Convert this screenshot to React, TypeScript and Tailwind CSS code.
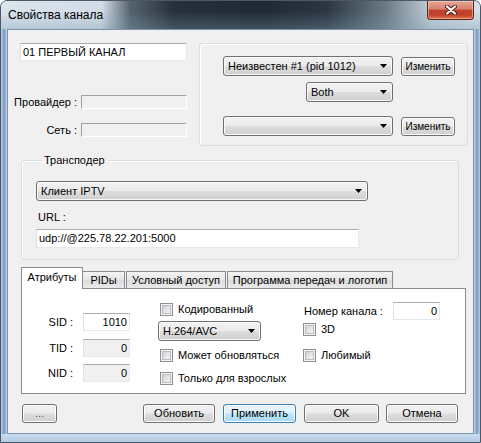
import React from 'react'

const font = "[font-family:'Liberation_Sans',Arial,sans-serif]"

function Arrow() {
  return (
    <svg width="7" height="4" viewBox="0 0 7 4" className="shrink-0">
      <path d="M0 0h7L3.5 4z" fill="#000" />
    </svg>
  )
}

function Combo({ className, text }: { className: string; text?: string }) {
  return (
    <div
      className={`flex items-center justify-between rounded-[3px] border border-[#707070] bg-[linear-gradient(#f2f2f2_0%,#ebebeb_48%,#dddddd_52%,#cfcfcf_100%)] pl-[4px] pr-[5px] text-[11px] shadow-[inset_0_0_0_1px_#fafafa] ${className}`}
    >
      <span className="truncate">{text}</span>
      <Arrow />
    </div>
  )
}

function Button({ className, children, hot }: { className: string; children: React.ReactNode; hot?: boolean }) {
  const skin = hot
    ? 'border-[#3c7fb1] bg-[linear-gradient(#eaf6fd_0%,#d9f0fc_48%,#bee6fd_52%,#a7d9f5_100%)]'
    : 'border-[#707070] bg-[linear-gradient(#f2f2f2_0%,#ebebeb_48%,#dddddd_52%,#cfcfcf_100%)]'
  return (
    <div
      className={`flex items-center justify-center rounded-[3px] border ${skin} shadow-[inset_0_0_0_1px_#fcfcfc] ${className}`}
    >
      {children}
    </div>
  )
}

function TextBox({ className, value, right }: { className: string; value?: string; right?: boolean }) {
  return (
    <div
      className={`flex items-center border border-t-[#abadb3] border-l-[#dbdfe6] border-r-[#e3e9ef] border-b-[#e3e9ef] px-[2px] text-[11px] ${right ? 'justify-end' : ''} ${className}`}
    >
      {value}
    </div>
  )
}

function Check({ label, className }: { label: string; className: string }) {
  return (
    <div className={`flex items-center ${className}`}>
      <div className="h-[13px] w-[13px] border border-[#8e8f8f] bg-[#f4f4f4] p-[1px]">
        <div className="h-full w-full border border-[#b8bcc1] bg-[linear-gradient(135deg,#cfd2d6,#f6f6f6)]" />
      </div>
      <span className="ml-[5px] text-[11px] leading-[13px]">{label}</span>
    </div>
  )
}

function Sunken({ className }: { className: string }) {
  return <div className={`border border-t-[#a0a0a0] border-l-[#a0a0a0] border-r-white border-b-white ${className}`} />
}

export default function App() {
  return (
    <div
      className={`${font} flex h-[443px] w-[481px] flex-col overflow-hidden rounded-t-[7px] border border-[#4a5868] bg-[#c3d6ea] font-normal text-black`}
    >
      {/* title bar */}
      <div className="flex h-[28px] shrink-0 items-start justify-between bg-[linear-gradient(to_bottom,rgba(0,0,0,0)_35%,rgba(120,155,175,0.35)_100%),linear-gradient(to_right,#dbe4ed_0%,#d2dce6_21%,#56636f_27%,#26303a_36%,#1f2933_55%,#2c3743_68%,#6a7884_80%,#c3cfdb_90%,#d6e0ea_100%)]">
        <span className="ml-[7px] mt-[7px] text-[12px] leading-[15px] text-black">Свойства канала</span>
        <div className="mr-[6px] flex h-[19px] w-[47px] items-center justify-center rounded-b-[4px] border border-t-0 border-[#5c2318] bg-[linear-gradient(#e7a896_0%,#d4806c_45%,#c0412b_52%,#c0432c_78%,#e0744f_100%)] shadow-[inset_0_0_0_1px_rgba(255,210,190,0.55)]">
          <svg width="12" height="10" viewBox="0 0 12 10">
            <path d="M2 1.5L10 8.5M10 1.5L2 8.5" stroke="#4a1a10" strokeWidth="4" strokeLinecap="round" />
            <path d="M2 1.5L10 8.5M10 1.5L2 8.5" stroke="#fff" strokeWidth="2.2" strokeLinecap="round" />
          </svg>
        </div>
      </div>

      <div className="flex flex-1">
        <div className="w-[6px] bg-[linear-gradient(to_right,#b9cee5,#7a98c0_55%,#c8dbef)]" />

        {/* client */}
        <div className="flex w-[467px] flex-col border border-[#7d91a8] bg-[#f0f0f0]">
          {/* top section */}
          <div className="flex items-start pt-[13px]">
            <div className="flex w-[179px] flex-col">
              <TextBox className="ml-[12px] h-[18px] w-[167px] bg-white" value="01 ПЕРВЫЙ КАНАЛ" />
              <div className="mt-[33px] flex items-center">
                <span className="w-[69px] text-right text-[11px]">Провайдер :</span>
                <Sunken className="ml-[4px] h-[14px] w-[106px]" />
              </div>
              <div className="mt-[11px] flex items-center">
                <span className="w-[69px] text-right text-[11px]">Сеть :</span>
                <Sunken className="ml-[4px] h-[14px] w-[106px]" />
              </div>
            </div>

            <div className="ml-[12px] flex h-[103px] w-[269px] flex-col rounded-[3px] border border-[#d5dfe5] pl-[23px] pt-[12px] shadow-[inset_1px_1px_0_#fff]">
              <div className="flex items-center">
                <Combo className="h-[20px] w-[170px]" text="Неизвестен #1 (pid 1012)" />
                <Button className="ml-[8px] h-[19px] w-[54px] text-[10px]">Изменить</Button>
              </div>
              <Combo className="ml-[83px] mt-[6px] h-[20px] w-[87px]" text="Both" />
              <div className="mt-[14px] flex items-center">
                <Combo className="h-[20px] w-[170px]" />
                <Button className="ml-[8px] h-[19px] w-[54px] text-[10px]">Изменить</Button>
              </div>
            </div>
          </div>

          {/* transponder */}
          <fieldset className="ml-[13px] mt-[7px] w-[438px] rounded-[3px] border border-[#d5dfe5] pb-[11px] pl-[14px] shadow-[inset_1px_1px_0_#fff]">
            <legend className="ml-[6px] px-[2px] text-[11px] font-normal leading-[14px]">Транспoдер</legend>
            <Combo className="mt-[14px] h-[20px] w-[332px]" text="Клиент IPTV" />
            <div className="ml-[2px] mt-[10px] text-[11px] leading-[13px]">URL :</div>
            <TextBox className="mt-[5px] h-[19px] w-[323px] bg-white" value="udp://@225.78.22.201:5000" />
          </fieldset>

          {/* tabs */}
          <div className="ml-[13px] mt-[7px] flex items-end text-[11px]">
            <div className="relative z-10 -mb-[1px] flex h-[22px] w-[62px] items-center justify-center border border-b-0 border-[#898c95] bg-white pb-[2px]">
              Атрибуты
            </div>
            <div className="flex h-[17px] w-[42px] items-center justify-center border border-b-0 border-l-0 border-[#898c95] bg-[linear-gradient(#f3f3f3,#e6e6e6_50%,#dcdcdc_51%,#e9e9e9)]">
              PIDы
            </div>
            <div className="ml-[1px] flex h-[17px] w-[100px] items-center justify-center border border-b-0 border-[#898c95] bg-[linear-gradient(#f3f3f3,#e6e6e6_50%,#dcdcdc_51%,#e9e9e9)]">
              Условный доступ
            </div>
            <div className="ml-[1px] flex h-[17px] w-[166px] items-center justify-center border border-b-0 border-[#898c95] bg-[linear-gradient(#f3f3f3,#e6e6e6_50%,#dcdcdc_51%,#e9e9e9)]">
              Программа передач и логотип
            </div>
          </div>
          <div className="ml-[13px] flex h-[106px] w-[445px] items-start border border-[#898c95] bg-white text-[11px]">
            <div className="flex w-[108px] flex-col">
              <div className="mt-[24px] flex items-center">
                <span className="w-[51px] text-right">SID :</span>
                <TextBox className="ml-[10px] h-[18px] w-[47px] bg-white" value="1010" right />
              </div>
              <div className="mt-[8px] flex items-center">
                <span className="w-[51px] text-right">TID :</span>
                <TextBox className="ml-[10px] h-[18px] w-[47px] bg-[#f0f0f0]" value="0" right />
              </div>
              <div className="mt-[7px] flex items-center">
                <span className="w-[51px] text-right">NID :</span>
                <TextBox className="ml-[10px] h-[18px] w-[47px] bg-[#f0f0f0]" value="0" right />
              </div>
            </div>

            <div className="ml-[28px] flex w-[145px] flex-col">
              <Check className="ml-[2px] mt-[14px]" label="Кодированный" />
              <Combo className="mt-[5px] h-[20px] w-[103px]" text="H.264/AVC" />
              <Check className="ml-[2px] mt-[8px]" label="Может обновляться" />
              <Check className="ml-[2px] mt-[10px]" label="Только для взрослых" />
            </div>

            <div className="flex flex-col">
              <div className="mt-[13px] flex items-center">
                <span className="w-[90px] pl-[1px]">Номер канала :</span>
                <TextBox className="h-[18px] w-[47px] bg-white" value="0" right />
              </div>
              <Check className="mt-[3px]" label="3D" />
              <Check className="mt-[13px]" label="Любимый" />
            </div>
          </div>

          {/* buttons */}
          <div className="ml-[14px] mt-[10px] flex items-center text-[11px]">
            <Button className="h-[19px] w-[35px] text-[#555]">...</Button>
            <Button className="ml-[86px] h-[19px] w-[72px]">Обновить</Button>
            <Button className="ml-[8px] h-[19px] w-[73px]" hot>
              Применить
            </Button>
            <Button className="ml-[8px] h-[19px] w-[75px]">OK</Button>
            <Button className="ml-[7px] h-[19px] w-[72px]">Отмена</Button>
          </div>
        </div>

        <div className="w-[6px] bg-[linear-gradient(to_left,#b9cee5,#7a98c0_55%,#c8dbef)]" />
      </div>
      <div className="h-[8px] shrink-0 bg-[linear-gradient(#c8dbef,#b3cae3)]" />
    </div>
  )
}
